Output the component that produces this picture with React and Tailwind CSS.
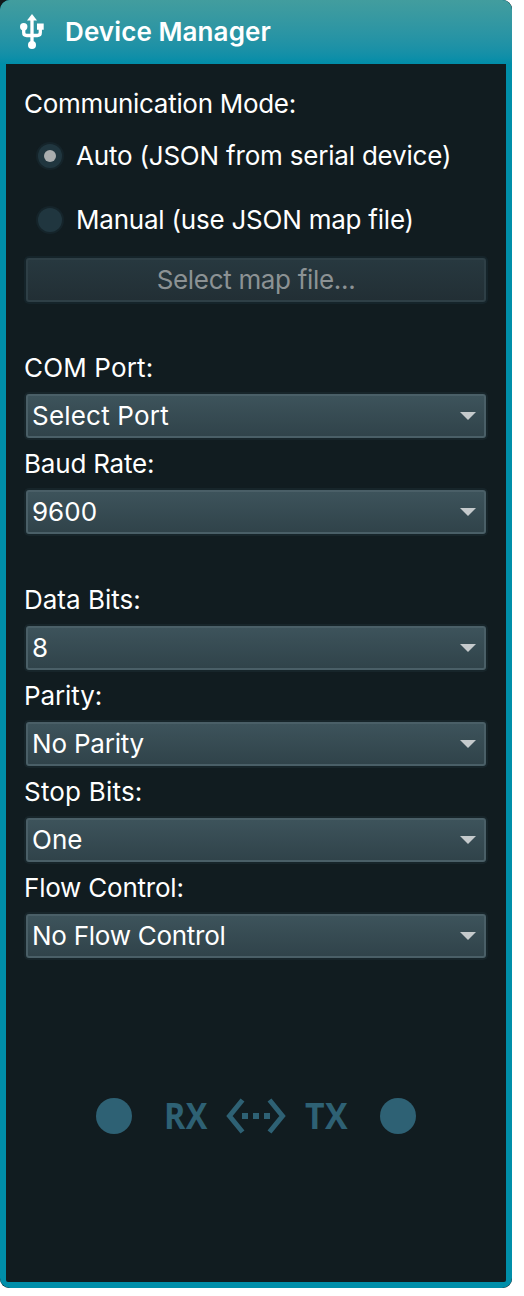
import React from "react";

function Label({ children, spacing }) {
  return <div className={`flex h-12 items-center pb-px whitespace-nowrap ${spacing}`}>{children}</div>;
}

function Select({ value, spacing }) {
  return (
    <button className="block h-12 w-full rounded-[5px] bg-[#17252a] p-[2px] text-left">
      <span className="flex h-11 items-center justify-between rounded-[3px] border-2 border-[#4a5f67] bg-linear-to-b from-[#3d535b] to-[#30434a] pr-2 pl-1">
        <span className={`pb-px whitespace-nowrap ${spacing}`}>{value}</span>
        <svg width="16" height="8" viewBox="0 0 16 8" fill="#c5cacc">
          <path d="M0 0h16L8 8z" />
        </svg>
      </span>
    </button>
  );
}

function Field({ label, value, labelSpacing = "", spacing = "" }) {
  return (
    <div>
      <Label spacing={labelSpacing}>{label}</Label>
      <Select value={value} spacing={spacing} />
    </div>
  );
}

function Radio({ label, checked, spacing = "" }) {
  return (
    <label className="flex h-16 items-center pl-3">
      <span className="flex size-7 items-center justify-center rounded-full bg-[#15242a]">
        <span className="flex size-6 items-center justify-center rounded-full bg-[#20363f]">
          {checked && <span className="size-3 rounded-full bg-[#a9adae]" />}
        </span>
      </span>
      <span className={`ml-3 pb-px whitespace-nowrap ${spacing}`}>{label}</span>
    </label>
  );
}

function UsbIcon() {
  return (
    <svg width="24" height="36" viewBox="0 0 24 36" fill="none">
      <path d="M12 4v26M3.700 13v5.500q0 3 3 3h10.600q3 0 3-3v-5.500" stroke="#fff" strokeWidth="3.300" />
      <path d="M12 0l5 6.500H7z" fill="#fff" />
      <circle cx="3.7" cy="12.7" r="3.7" fill="#fff" />
      <path d="M17 9.500h6.700v6.300h-6.700z" fill="#fff" />
      <circle cx="12" cy="31" r="4" fill="#fff" />
    </svg>
  );
}

function Arrows() {
  return (
    <svg width="60" height="36" viewBox="0 0 60 36" fill="none">
      <path d="M16.500 2L3.500 18l13 16M43.500 2l13 16-13 16" stroke="#2e6174" strokeWidth="5" />
      <path d="M16 15h6v6h-6zM27 15h6v6h-6zM38 15h6v6h-6z" fill="#2e6174" />
    </svg>
  );
}

export default function App() {
  return (
    <div className="h-[1296px] w-[524px] bg-white font-['Inter',sans-serif] text-[26px] text-white">
      <div className="h-[1288px] w-[512px] rounded-tr-[9px] rounded-b-[9px] bg-[#12181a]">
        <div className="flex h-full flex-col overflow-hidden rounded-[10px] bg-[#008ea9]">
          <header className="flex h-16 shrink-0 items-center bg-linear-to-b from-[#429d9e] to-[#008da9] pl-5">
            <UsbIcon />
            <h1 className="ml-[21px] pb-px text-[26px] font-semibold tracking-[0.1px] whitespace-nowrap">
              Device Manager
            </h1>
          </header>
          <main className="mx-[6px] mb-[6px] flex-1 rounded-b-[2px] bg-[#111c20] px-[18px] pt-4">
            <div className="flex h-11 items-center pt-[3px] tracking-[-0.3px] whitespace-nowrap">
              Communication Mode:
            </div>
            <Radio label="Auto (JSON from serial device)" spacing="tracking-[-0.2px]" checked />
            <Radio label="Manual (use JSON map file)" spacing="tracking-[-0.22px]" />
            <button disabled className="mt-1 block h-12 w-full rounded-[5px] bg-[#15242a] p-[2px] text-[#8c9294]">
              <span className="flex h-11 items-center justify-center rounded-[3px] border-2 border-[#2e3f46] bg-linear-to-b from-[#27383f] to-[#222f35]">
                <span className="pb-px tracking-[-0.32px] whitespace-nowrap">Select map file...</span>
              </span>
            </button>
            <div className="mt-10">
              <Field label="COM Port:" value="Select Port" labelSpacing="tracking-[0.15px]" spacing="tracking-[0.2px]" />
              <Field label="Baud Rate:" value="9600" labelSpacing="tracking-[-0.2px]" />
            </div>
            <div className="mt-10">
              <Field label="Data Bits:" value="8" />
              <Field label="Parity:" value="No Parity" labelSpacing="tracking-[-0.1px]" spacing="tracking-[-0.2px]" />
              <Field label="Stop Bits:" value="One" labelSpacing="tracking-[0.2px]" />
              <Field
                label="Flow Control:"
                value="No Flow Control"
                labelSpacing="tracking-[-0.22px]"
                spacing="tracking-[-0.27px]"
              />
            </div>
            <div className="mt-[132px] flex h-12 items-center pl-[72px] font-['Open_Sans',sans-serif] text-[36px] leading-none font-bold tracking-[0.5px] text-[#2e6174]">
              <span className="size-9 rounded-full bg-[#2e6174]" />
              <span className="ml-[32px] w-[62px] origin-left scale-x-[0.9]">RX</span>
              <Arrows />
              <span className="ml-[19px] w-[75px] origin-left scale-x-[0.94]">TX</span>
              <span className="size-9 rounded-full bg-[#2e6174]" />
            </div>
          </main>
        </div>
      </div>
    </div>
  );
}
